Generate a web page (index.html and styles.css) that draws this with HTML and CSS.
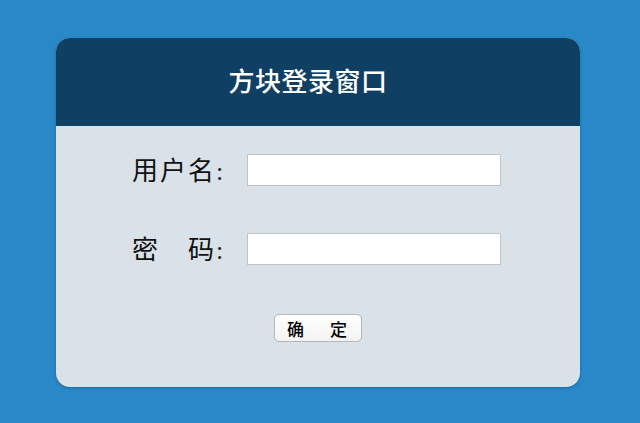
FILE: index.html
```html
<!DOCTYPE html>
<html lang="zh-CN">
<head>
    <meta charset="UTF-8" />
    <meta name="viewport" content="width=device-width, initial-scale=1.0" />
    <title>方块登录窗口</title>
    <link rel="stylesheet" href="styles.css">
</head>
<body>

<div class="login-box">
    <div class="login-head">
        <h2>方块登录窗口</h2>
    </div>
    <form class="login-body">
        <div class="row">
            <label for="user">用户名:</label>
            <input type="text" id="user">
        </div>
        <div class="row">
            <label for="pwd">密　码:</label>
            <input type="password" id="pwd">
        </div>
        <div class="actions">
            <button type="submit"><span>确</span><span>定</span></button>
        </div>
    </form>
</div>

</body>
</html>
```

FILE: styles.css
```css
* {
    box-sizing: border-box;
    margin: 0;
    padding: 0;
}

body {
    font-family: "Liberation Serif", "Noto Sans CJK SC", serif;
    background: #2888c8;
    height: 100vh;
    overflow: hidden;
}

.login-box {
    width: 524px;
    margin: 38px 0 0 56px;
    border-radius: 14px;
    overflow: hidden;
    background: #d9e2e8;
    box-shadow: 0 1px 3px rgba(0, 0, 0, 0.25);
}

.login-head {
    height: 88px;
    background: #0f4064;
    display: flex;
    justify-content: center;
    align-items: center;
    padding: 0 20px 6px 0;
}

.login-head h2 {
    color: #fff;
    font-size: 26px;
    font-weight: 500;
    letter-spacing: 0.5px;
}

.login-body {
    padding: 28px 0 45px 76px;
    display: flex;
    flex-direction: column;
    gap: 47px;
}

.row {
    display: flex;
    align-items: center;
    height: 32px;
}

.row label {
    width: 115px;
    font-size: 26px;
    letter-spacing: 2px;
    color: #111;
    margin-top: -4px;
}

.row input {
    width: 254px;
    height: 32px;
    border: 1px solid #bfc4c7;
    background: #fff;
    font-size: 16px;
    padding: 0 6px;
}

.actions {
    display: flex;
    justify-content: center;
    padding-right: 76px;
    margin-top: 2px;
}

.actions button {
    display: inline-flex;
    align-items: center;
    gap: 26px;
    height: 28px;
    padding: 0 14px 0 12px;
    background: linear-gradient(#ffffff, #f3f3f3);
    border: 1px solid #b5b8ba;
    border-radius: 5px;
    font-family: "Noto Sans CJK SC", sans-serif;
    font-size: 17px;
    font-weight: 500;
    color: #000;
}
```
